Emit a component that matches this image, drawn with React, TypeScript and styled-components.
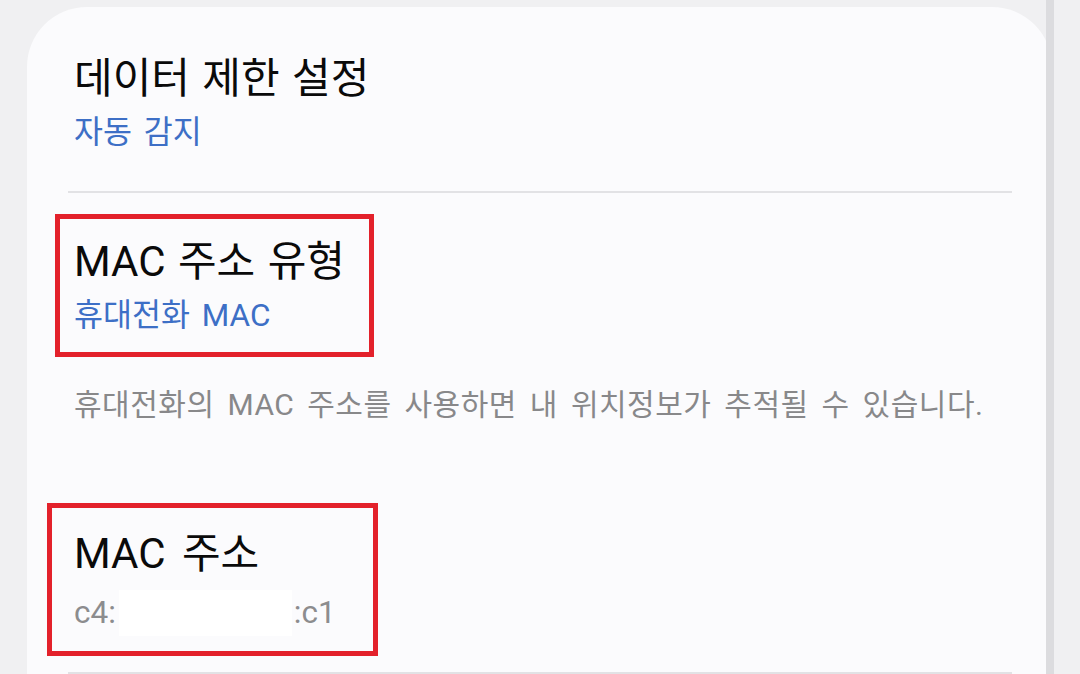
import React from 'react';
import styled, { createGlobalStyle } from 'styled-components';

const GlobalStyle = createGlobalStyle`
  html, body {
    margin: 0;
    padding: 0;
    background: #f0f0f2;
    font-family: Roboto, "Noto Sans CJK KR", "Noto Sans", sans-serif;
    -webkit-font-smoothing: antialiased;
  }
`;

type Box = { top: number; left: number; width: number; height: number };

const settings = {
  dataLimit: { title: '데이터 제한 설정', value: '자동 감지' },
  macType: { title: 'MAC 주소 유형', value: '휴대전화 MAC' },
  macHint: '휴대전화의 MAC 주소를 사용하면 내 위치정보가 추적될 수 있습니다.',
  mac: { title: 'MAC 주소', prefix: 'c4:', suffix: ':c1' },
};

export default function App() {
  return (
    <>
      <GlobalStyle />
      <Screen>
        <Card>
          <Item $bottom={37}>
            <Title>{settings.dataLimit.title}</Title>
            <Value>{settings.dataLimit.value}</Value>
          </Item>
          <Divider />
          <Item $top={42}>
            <Marked>
              <Title>{settings.macType.title}</Title>
              <Value>{settings.macType.value}</Value>
              <Marker $box={{ top: -21, left: -19, width: 319, height: 143 }} />
            </Marked>
          </Item>
          <Hint>{settings.macHint}</Hint>
          <Item $bottom={36}>
            <Marked>
              <Title $wide>{settings.mac.title}</Title>
              <Value $muted>
                {settings.mac.prefix}
                <Redacted />
                {settings.mac.suffix}
              </Value>
              <Marker $box={{ top: -24, left: -27, width: 331, height: 153 }} />
            </Marked>
          </Item>
          <Divider />
        </Card>
        <Scrollbar />
      </Screen>
    </>
  );
}

const Screen = styled.div`
  position: relative;
  width: 1080px;
  height: 674px;
  overflow: hidden;
  padding: 7px 28px 0 27px;
  box-sizing: border-box;
  background: #f0f0f2;
`;

const Card = styled.div`
  background: #fbfbfd;
  border-radius: 60px 60px 0 0;
  padding: 45px 40px 0 41px;
  min-height: 700px;
  box-sizing: border-box;
`;

const Item = styled.div<{ $top?: number; $bottom?: number }>`
  padding: ${p => p.$top ?? 0}px 6px ${p => p.$bottom ?? 0}px;
`;

const Marked = styled.div`
  position: relative;
`;

const Marker = styled.span<{ $box: Box }>`
  position: absolute;
  top: ${p => p.$box.top}px;
  left: ${p => p.$box.left}px;
  width: ${p => p.$box.width}px;
  height: ${p => p.$box.height}px;
  box-sizing: border-box;
  border: 5px solid #e3212b;
  pointer-events: none;
`;

const Title = styled.div<{ $wide?: boolean }>`
  font-size: 42px;
  line-height: 54px;
  word-spacing: ${p => (p.$wide ? 6 : 2)}px;
  color: #0a0a0a;
  white-space: nowrap;
`;

const Value = styled.div<{ $muted?: boolean }>`
  margin-top: ${p => (p.$muted ? 9 : 6)}px;
  font-size: 31.5px;
  line-height: 42px;
  word-spacing: 4px;
  color: ${p => (p.$muted ? '#8c8c8e' : '#3d6fc6')};
  white-space: nowrap;
  display: flex;
  align-items: center;
`;

const Redacted = styled.span`
  display: inline-block;
  width: 173px;
  height: 46px;
  margin: 0 2px 0 3px;
  background: #ffffff;
`;

const Hint = styled.p`
  margin: 0;
  padding: 49px 6px 103px;
  font-size: 30px;
  line-height: 38px;
  letter-spacing: 0.5px;
  word-spacing: 5px;
  color: #88888a;
  white-space: nowrap;
`;

const Divider = styled.hr`
  margin: 0;
  border: none;
  height: 2px;
  background: #e2e2e5;
`;

const Scrollbar = styled.div`
  position: absolute;
  top: 0;
  bottom: 0;
  right: 26px;
  width: 8px;
  background: #dcdcdf;
`;
